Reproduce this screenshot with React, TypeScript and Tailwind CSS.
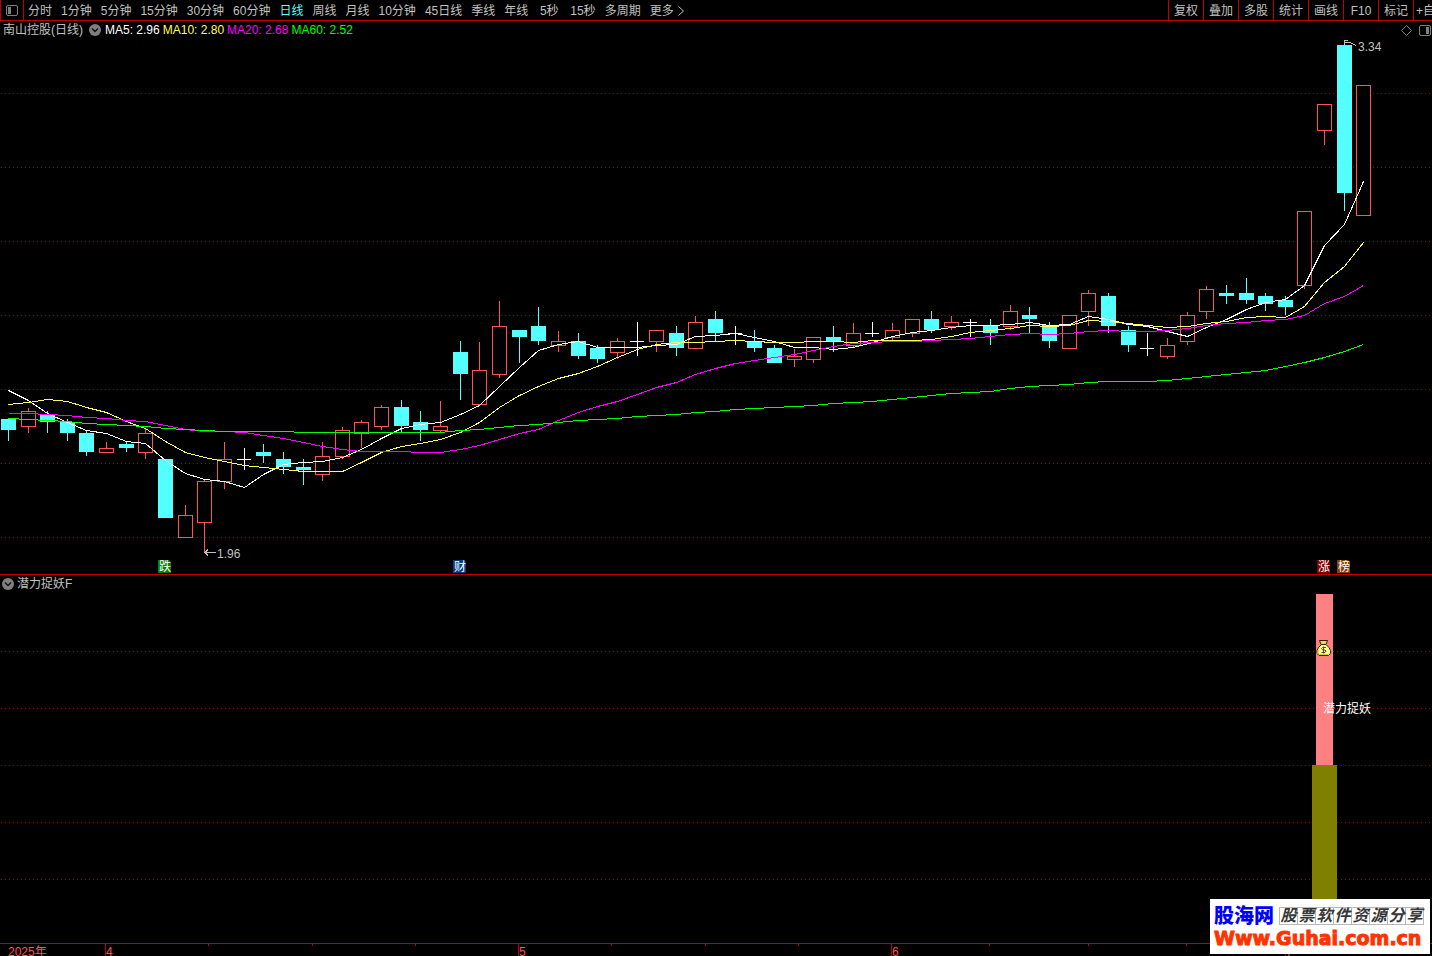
import React from "react";

const PERIODS = [
  "分时", "1分钟", "5分钟", "15分钟", "30分钟", "60分钟", "日线", "周线", "月线",
  "10分钟", "45日线", "季线", "年线", "5秒", "15秒", "多周期",
];

const TOOLS = ["复权", "叠加", "多股", "统计", "画线", "F10", "标记"];

type Kind = "u" | "d" | "n";
// kind (up / down / neutral), body top, body bottom, high, low
type Candle = [Kind, number, number, number, number];

const CANDLES: Candle[] = [
  ["d", 419, 430, 419, 441], ["u", 411, 426, 408, 433], ["d", 415, 422, 411, 433],
  ["d", 422, 433, 419, 441], ["d", 433, 452, 430, 456], ["u", 448, 452, 442, 452],
  ["d", 444, 448, 442, 452], ["u", 433, 452, 428, 459], ["d", 459, 518, 459, 518],
  ["u", 515, 537, 505, 537], ["u", 481, 522, 480, 553], ["u", 459, 481, 442, 489],
  ["n", 459, 459, 448, 470], ["d", 452, 456, 444, 463], ["d", 459, 467, 452, 474],
  ["d", 467, 470, 459, 485], ["u", 456, 474, 442, 481], ["u", 430, 456, 427, 459],
  ["u", 422, 433, 420, 448], ["u", 407, 426, 405, 430], ["d", 407, 426, 400, 432],
  ["d", 422, 430, 411, 441], ["u", 426, 430, 401, 432], ["d", 352, 374, 341, 400],
  ["u", 370, 404, 342, 404], ["u", 326, 374, 301, 378], ["d", 330, 337, 330, 363],
  ["d", 326, 341, 307, 345], ["u", 341, 345, 331, 352], ["d", 341, 356, 333, 359],
  ["d", 348, 359, 345, 363], ["u", 341, 352, 338, 359], ["n", 341, 341, 322, 356],
  ["u", 330, 341, 330, 352], ["d", 333, 348, 326, 356], ["u", 322, 348, 316, 348],
  ["d", 319, 333, 311, 341], ["n", 333, 333, 326, 345], ["d", 341, 348, 330, 352],
  ["d", 348, 363, 345, 363], ["u", 356, 359, 349, 367], ["u", 337, 359, 337, 363],
  ["d", 337, 341, 326, 352], ["u", 333, 345, 323, 348], ["n", 333, 333, 322, 337],
  ["u", 330, 337, 323, 341], ["u", 319, 333, 319, 337], ["d", 319, 330, 311, 333],
  ["u", 322, 326, 316, 330], ["n", 322, 322, 319, 337], ["d", 325, 333, 319, 345],
  ["u", 311, 326, 305, 330], ["d", 315, 319, 307, 333], ["d", 325, 341, 322, 348],
  ["u", 315, 348, 315, 348], ["u", 293, 311, 290, 326], ["d", 296, 326, 293, 333],
  ["d", 330, 345, 326, 352], ["n", 348, 348, 333, 356], ["u", 345, 356, 338, 359],
  ["u", 315, 341, 312, 345], ["u", 289, 311, 286, 319], ["d", 293, 296, 285, 304],
  ["d", 293, 300, 278, 304], ["d", 296, 304, 293, 311], ["d", 300, 307, 296, 315],
  ["u", 211, 285, 211, 289], ["u", 104, 130, 104, 145], ["d", 45, 193, 43, 211],
  ["u", 85, 215, 85, 215],
];

const MA5 = [
  390, 400, 413, 422, 430, 433, 441, 443, 460, 473, 479, 481, 487, 474, 464, 462, 461, 457, 449, 438,
  428, 424, 422, 414, 405, 386, 367, 350, 344, 341, 347, 347, 347, 345, 344, 336, 335, 333, 337, 341,
  347, 347, 349, 347, 342, 336, 332, 330, 327, 325, 325, 324, 322, 325, 324, 316, 319, 324, 326, 331,
  336, 327, 319, 309, 302, 299, 285, 245, 224, 181,
];
const MA10 = [
  404, 402, 399, 401, 407, 412, 421, 428, 441, 452, 457, 461, 465, 467, 469, 471, 471, 471, 462, 452,
  446, 443, 439, 432, 422, 407, 395, 386, 378, 373, 366, 357, 349, 344, 342, 342, 341, 340, 341, 342,
  342, 341, 341, 342, 340, 340, 340, 339, 336, 332, 330, 328, 325, 326, 325, 320, 321, 323, 325, 327,
  326, 323, 321, 317, 316, 317, 306, 282, 266, 242,
];
const MA20 = [
  413, 413, 414, 415, 417, 418, 420, 421, 425, 429, 431, 431, 432, 435, 438, 442, 446, 449, 451, 451,
  451, 452, 452, 449, 445, 439, 433, 429, 420, 412, 406, 401, 394, 387, 382, 374, 368, 363, 360, 357,
  354, 350, 346, 343, 342, 341, 341, 340, 339, 338, 336, 334, 333, 334, 333, 331, 330, 331, 331, 330,
  328, 325, 323, 322, 320, 319, 315, 303, 296, 285,
];
const MA60 = [
  418, 419, 420, 421, 423, 424, 425, 426, 428, 429, 430, 431, 431, 431, 431, 432, 432, 432, 432, 432,
  432, 432, 432, 430, 429, 427, 425, 424, 422, 420, 419, 418, 416, 415, 414, 412, 411, 409, 408, 407,
  406, 405, 403, 402, 401, 399, 397, 395, 393, 392, 391, 388, 386, 385, 384, 382, 381, 381, 381, 380,
  378, 376, 374, 372, 370, 366, 362, 357, 351, 344,
];

const center = (i: number) => Math.floor(8.38 + i * 19.645);
const toPoints = (ys: number[]) => ys.map((y, i) => `${center(i) + 0.5},${y + 0.5}`).join(" ");

function Grid({ rows }: { rows: number[] }) {
  return (
    <g stroke="#a00000" strokeDasharray="1 3" shapeRendering="crispEdges">
      {rows.map((y) => (
        <line key={y} x1={1} x2={1432} y1={y + 0.5} y2={y + 0.5} />
      ))}
    </g>
  );
}

function CandleShape({ candle, x }: { candle: Candle; x: number }) {
  const [kind, top, bottom, high, low] = candle;
  if (kind === "n") {
    return (
      <g fill="#ffffff">
        <rect x={x - 7} y={top} width={14} height={1} />
        <rect x={x} y={high} width={1} height={low - high} />
      </g>
    );
  }
  if (kind === "d") {
    return (
      <g fill="#54ffff">
        <rect x={x - 7} y={top} width={15} height={bottom - top} />
        <rect x={x} y={high} width={1} height={low - high} />
      </g>
    );
  }
  return (
    <g fill="#ff5454">
      <rect x={x} y={high} width={1} height={low - high} />
      <rect x={x - 6.5} y={top + 0.5} width={14} height={bottom - top} fill="#000000" stroke="#ff5454" />
    </g>
  );
}

function Badge({ x, fill, label }: { x: number; fill: string; label: string }) {
  return (
    <g>
      <path d={`M${x} 560h11l2 2v11h-13z`} fill={fill} />
      <text x={x + 1} y={571} fill="#ffffff" fontSize={12}>{label}</text>
    </g>
  );
}

function PriceChart() {
  return (
    <svg viewBox="0 39 1432 535" className="block h-auto w-full" role="img" aria-label="南山控股 日线">
      <Grid rows={[93, 167, 241, 315, 389, 463, 537]} />
      <g shapeRendering="crispEdges">
        {CANDLES.map((c, i) => (
          <CandleShape key={i} candle={c} x={center(i)} />
        ))}
      </g>
      <g fill="none" strokeWidth={1} shapeRendering="crispEdges">
        <polyline points={toPoints(MA5)} stroke="#ffffff" />
        <polyline points={toPoints(MA10)} stroke="#ffff54" />
        <polyline points={toPoints(MA20)} stroke="#ff00ff" />
        <polyline points={toPoints(MA60)} stroke="#00ff00" />
      </g>
      <g fill="none" stroke="#c0c0c0" shapeRendering="crispEdges">
        <path d="M204 552.5h12M208 549.5l-3 3l3 3" />
        <path d="M1348 40.500h-3l-.5 3.500M1345 42.500h5l2 1l4 2" />
      </g>
      <g fill="#c0c0c0" fontSize={12}>
        <text x={217} y={558}>1.96</text>
        <text x={1358} y={51}>3.34</text>
      </g>
      <Badge x={158} fill="#008000" label="跌" />
      <Badge x={453} fill="#004080" label="财" />
      <Badge x={1317} fill="#800000" label="涨" />
      <Badge x={1337} fill="#804000" label="榜" />
    </svg>
  );
}

function MoneyBag() {
  return (
    <g transform="translate(1316 640)">
      <path d="M3.500 .5h8l-1.500 4h-5z" fill="#f0e020" stroke="#302010" />
      <path d="M5.500 4.500h4.500l3 3l1.500 3v3l-2 2h-9.500l-2-2v-3l1.500-3z" fill="#ffff90" stroke="#302010" />
      <path d="M2.500 10l-.5 3l1.500 1.500h8.500l1.500-1.500" fill="none" stroke="#d8c818" />
      <path d="M10 7.500h-3.500l-1 1l1 1.500h2.500l1 1l-1 1.500h-3.500M7.500 6.500v7" fill="none" stroke="#604838" />
    </g>
  );
}

function IndicatorChart() {
  return (
    <svg viewBox="0 592 1432 351" className="block h-auto w-full" role="img" aria-label="潜力捉妖F">
      <Grid rows={[651, 708, 765, 822, 879]} />
      <rect x={1316} y={594} width={17} height={171} fill="#ff8080" />
      <rect x={1312} y={765} width={25} height={178} fill="#808000" />
      <MoneyBag />
      <text x={1323} y={713} fill="#ffffff" fontSize={12}>潜力捉妖</text>
    </svg>
  );
}

const MAJOR = [
  { x: 105, label: "4" },
  { x: 518, label: "5" },
  { x: 891, label: "6" },
  { x: 1285, label: "7" },
];
const MINOR = [208, 312, 415, 611, 705, 798, 989, 1088, 1186];

function TimeAxis() {
  return (
    <svg viewBox="0 943 1432 13" className="block h-auto w-full" role="img" aria-label="时间轴">
      <g fill="#c00000" shapeRendering="crispEdges">
        <rect x={0} y={943} width={1432} height={1} />
        {MAJOR.map((m) => <rect key={m.x} x={m.x} y={943} width={1} height={13} />)}
        {MINOR.map((x) => <rect key={x} x={x} y={943} width={1} height={3} />)}
      </g>
      <g fill="#ff5454" fontSize={12}>
        <text x={8} y={956}>2025年</text>
        {MAJOR.map((m) => <text key={m.x} x={m.x + 1} y={956}>{m.label}</text>)}
      </g>
    </svg>
  );
}

function Collapse({ label }: { label: string }) {
  return (
    <button type="button" aria-label={label} className="block size-3 shrink-0">
      <svg viewBox="0 0 12 12" className="size-3">
        <circle cx={6} cy={6} r={6} fill="#808080" />
        <path d="M3 4.500l3 3l3-3" fill="none" stroke="#101010" strokeWidth={1.400} />
      </svg>
    </button>
  );
}

function Watermark() {
  return (
    <a
      href="#guhai"
      className="absolute right-0.5 bottom-0.5 flex h-[55px] w-[220px] flex-col bg-white px-1 pt-[5px]"
    >
      <span className="flex items-center justify-between">
        <span className="text-[20px] leading-6 font-black text-[#0000ff]">股海网</span>
        <span className="mr-0.5 flex border-l border-[#b8b8b8]">
          {Array.from("股票软件资源分享").map((ch, i) => (
            <span
              key={i}
              className="h-[18px] w-[18px] border-y border-r border-[#b8b8b8] text-center text-[16px] leading-4 font-bold text-[#383838] italic"
            >
              {ch}
            </span>
          ))}
        </span>
      </span>
      <span className="font-['DejaVu_Sans',sans-serif] text-[19px] leading-5 font-bold whitespace-nowrap text-[#ff3300] [-webkit-text-stroke:1px_#ff3300]">
        Www.Guhai.com.cn
      </span>
    </a>
  );
}

export default function App() {
  return (
    <div className="relative min-h-screen overflow-hidden bg-black font-['Liberation_Sans','Noto_Sans_CJK_SC',sans-serif] text-[12px] leading-4 text-[#c0c0c0]">
      <header className="flex h-[21px] items-stretch border-b border-[#c00000]">
        <button
          type="button"
          aria-label="侧栏"
          className="flex w-6 shrink-0 items-center justify-center border-x border-[#c00000]"
        >
          <svg viewBox="0 0 12 11" className="h-[11px] w-3">
            <rect x={0.5} y={0.5} width={11} height={10} rx={1.500} fill="none" stroke="#808080" />
            <rect x={2} y={2} width={3} height={7} fill="#808080" />
          </svg>
        </button>
        <nav className="flex min-w-0 flex-1 items-center gap-[9px] overflow-hidden pt-px pl-1">
          {PERIODS.map((p) => (
            <button
              key={p}
              type="button"
              className={`min-w-6 shrink-0 whitespace-nowrap ${p === "日线" ? "text-[#54ffff]" : ""}`}
            >
              {p}
            </button>
          ))}
          <button type="button" className="flex shrink-0 items-center gap-1 whitespace-nowrap">
            更多
            <svg viewBox="0 0 6 10" className="h-2.5 w-1.5">
              <path d="M.5 .5l5 4.500l-5 4.500" fill="none" stroke="#c0c0c0" />
            </svg>
          </button>
        </nav>
        <div className="flex shrink-0">
          {TOOLS.map((t) => (
            <button key={t} type="button" className="w-[35px] border-l border-[#c00000] pt-px whitespace-nowrap">
              {t}
            </button>
          ))}
          <button
            type="button"
            className="w-[19px] overflow-hidden border-l border-[#c00000] pt-px pl-0.5 text-left whitespace-nowrap"
          >
            +自选
          </button>
        </div>
      </header>

      <main>
        <section className="border-b border-[#c00000]">
          <div className="flex h-[18px] items-center pr-px pl-[3px]">
            <span className="mr-1.5">南山控股(日线)</span>
            <Collapse label="主图指标" />
            <span className="ml-1 flex flex-1 gap-[3px]">
              <span className="text-white">MA5: 2.96</span>
              <span className="text-[#ffff54]">MA10: 2.80</span>
              <span className="text-[#ff00ff]">MA20: 2.68</span>
              <span className="text-[#00ff00]">MA60: 2.52</span>
            </span>
            <span className="flex items-center gap-[7px]">
              <button type="button" aria-label="标记点">
                <svg viewBox="0 0 11 11" className="block size-[11px]">
                  <path d="M5.500 .5l5 5l-5 5l-5-5z" fill="none" stroke="#808080" />
                </svg>
              </button>
              <button type="button" aria-label="右栏">
                <svg viewBox="0 0 12 11" className="block h-[11px] w-3">
                  <rect x={0.5} y={0.5} width={11} height={10} rx={1.500} fill="none" stroke="#808080" />
                  <rect x={7} y={2} width={3} height={7} fill="#808080" />
                </svg>
              </button>
            </span>
          </div>
          <PriceChart />
        </section>

        <section>
          <div className="flex h-[17px] items-center gap-[3px] pl-0.5">
            <Collapse label="副图指标" />
            <span>潜力捉妖F</span>
          </div>
          <IndicatorChart />
        </section>
        <TimeAxis />
      </main>
      <Watermark />
    </div>
  );
}
